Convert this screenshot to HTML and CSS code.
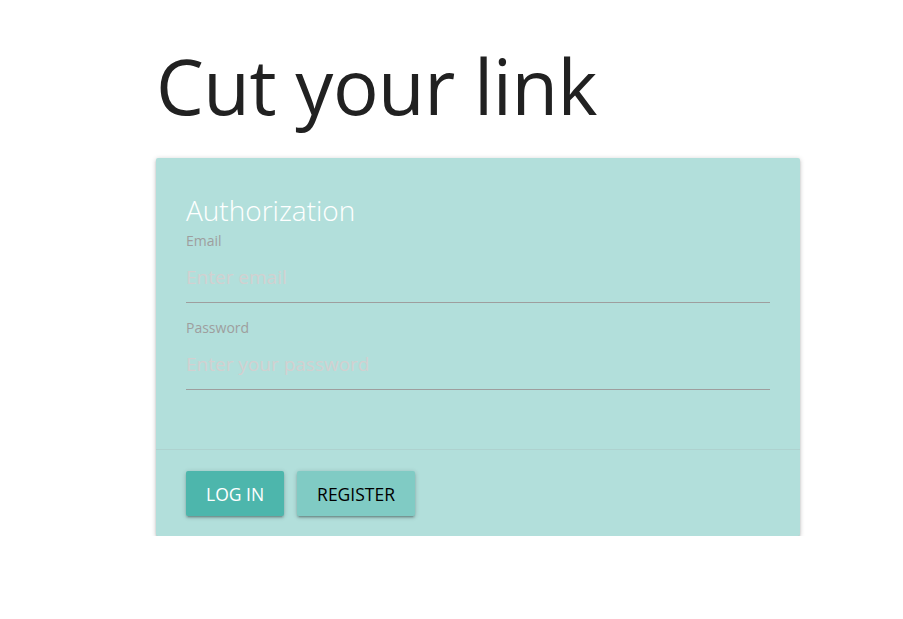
FILE: index.html
```html
<!DOCTYPE html>
<html>
<head>
<meta charset="utf-8">
<link rel="stylesheet" href="styles.css">
</head>
<body>
<main class="page">
  <h1 class="headline">Cut your link</h1>
  <section class="card">
    <div class="card-content">
      <h2 class="card-title">Authorization</h2>
      <div class="field">
        <label class="field-label" for="email">Email</label>
        <input class="field-input" id="email" type="text" placeholder="Enter email">
      </div>
      <div class="field">
        <label class="field-label" for="password">Password</label>
        <input class="field-input" id="password" type="password" placeholder="Enter your password">
      </div>
    </div>
    <div class="card-action">
      <button class="btn btn-primary">LOG IN</button>
      <button class="btn btn-secondary">REGISTER</button>
    </div>
  </section>
</main>
</body>
</html>
```
FILE: styles.css
```css
html, body {
  margin: 0;
  padding: 0;
  background: #ffffff;
}
body {
  font-family: "Open Sans", "Noto Sans", sans-serif;
  color: rgba(0, 0, 0, 0.87);
}
.page {
  width: 644px;
  margin-left: 156px;
  padding-top: 31px;
}
.headline {
  margin: 0;
  font-size: 76px;
  font-weight: 400;
  line-height: 110px;
  color: #212121;
  letter-spacing: -0.5px;
}
.card {
  margin-top: 17px;
  background: #b2dfdb;
  border-radius: 2px;
  box-shadow: 0 2px 2px 0 rgba(0,0,0,0.16), 0 3px 1px -2px rgba(0,0,0,0.14), 0 1px 5px 0 rgba(0,0,0,0.22);
}
.card-content {
  padding: 36px 30px 59px;
}
.card-title {
  margin: 0 0 5px;
  font-size: 28px;
  font-weight: 300;
  line-height: 32px;
  color: #ffffff;
}
.field {
  display: flex;
  flex-direction: column;
}
.field + .field {
  margin-top: 15px;
}
.field-label {
  font-size: 14px;
  line-height: 20px;
  color: #9e9e9e;
}
.field-input {
  border: none;
  border-bottom: 1px solid #9e9e9e;
  background: transparent;
  outline: none;
  height: 51px;
  padding: 0;
  font-family: inherit;
  font-size: 19px;
  color: rgba(0,0,0,0.87);
}
.field-input::placeholder {
  color: #d3d0d0;
}
.card-action {
  border-top: 1px solid rgba(160,160,160,0.2);
  padding: 21px 30px 20px;
  display: flex;
  gap: 13px;
}
.btn {
  height: 45px;
  border: none;
  border-radius: 2px;
  padding: 0 20px;
  font-family: inherit;
  font-size: 17.5px;
  box-shadow: 0 2px 2px 0 rgba(0,0,0,0.14), 0 3px 1px -2px rgba(0,0,0,0.12), 0 1px 5px 0 rgba(0,0,0,0.2);
}
.btn-primary {
  background: #4db6ac;
  color: #ffffff;
}
.btn-secondary {
  background: #80cbc4;
  color: #000000;
}
```
